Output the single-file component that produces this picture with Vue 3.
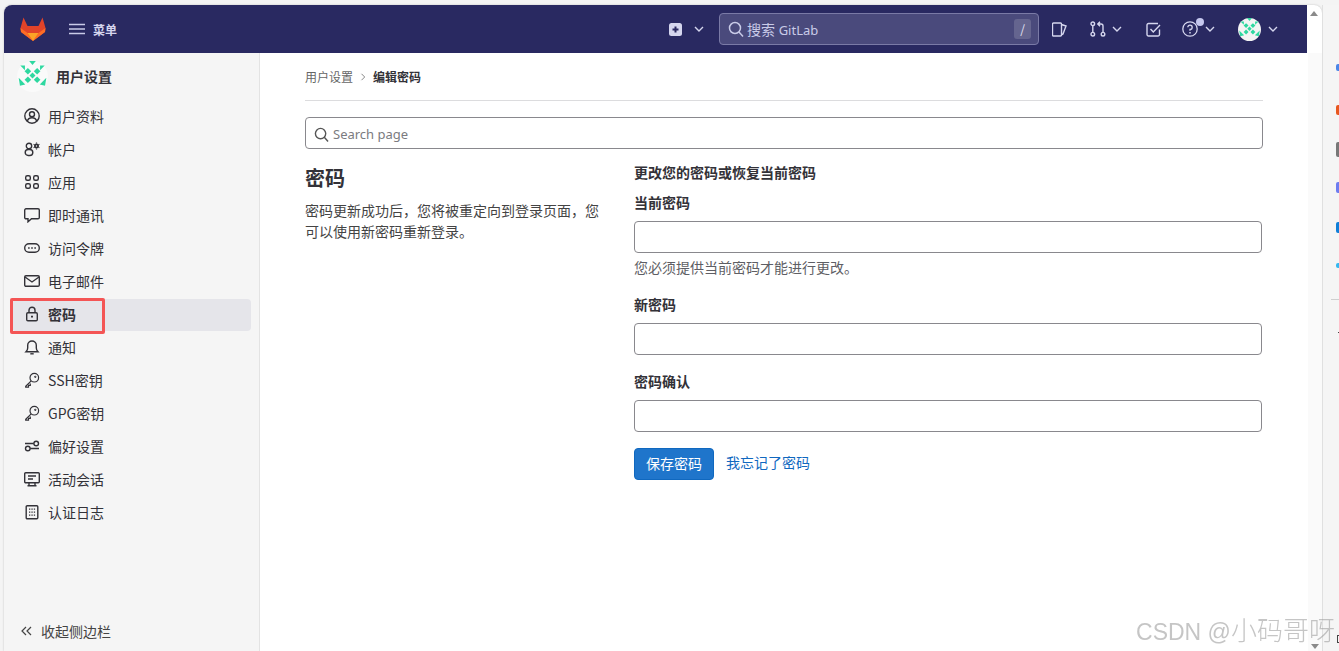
<script setup>
const menu = [
  { name: '用户资料', icon: 'profile' },
  { name: '帐户', icon: 'account' },
  { name: '应用', icon: 'apps' },
  { name: '即时通讯', icon: 'chat' },
  { name: '访问令牌', icon: 'token' },
  { name: '电子邮件', icon: 'mail' },
  { name: '密码', icon: 'lock', active: true },
  { name: '通知', icon: 'bell' },
  { name: 'SSH密钥', icon: 'key' },
  { name: 'GPG密钥', icon: 'key' },
  { name: '偏好设置', icon: 'prefs' },
  { name: '活动会话', icon: 'monitor' },
  { name: '认证日志', icon: 'log' },
]
const fields = [
  { label: '当前密码', hint: '您必须提供当前密码才能进行更改。' },
  { label: '新密码' },
  { label: '密码确认' },
]
const strip = [
  { y: 59, h: 7, c: '#4a86e8' },
  { y: 100, h: 10, c: '#e8571f' },
  { y: 137, h: 15, c: '#777' },
  { y: 177, h: 11, c: '#6d7cf0' },
  { y: 217, h: 11, c: '#0f7fd8' },
  { y: 258, h: 5, c: '#35b8f0' },
]
const diamond = (x, y, r = 10) => `${x},${y - r} ${x + r},${y} ${x},${y + r} ${x - r},${y}`
// identicon shapes, drawn in a 94 unit box centred on 60,58
const avatarShapes = [
  diamond(46, 42), diamond(74, 42), diamond(60, 55, 9), diamond(46, 68), diamond(74, 68),
  '50,11 70,11 60,23',
  '23,25 37,25 37,39',
  '97,25 83,25 83,39',
  '18,62 38,82 22,86',
  '102,62 82,82 98,86',
]
</script>

<template>
  <div class="Screen">
    <div class="Window">
      <header class="Navbar">
        <svg class="Logo" width="26" height="24" viewBox="0 0 26 24">
          <path d="M13 24 1 15 .5 11 3.500 .5 7.500 9h11L22.500 .5 25.500 11 25 15z" fill="#e24329" />
          <path d="M.5 11 1 15l12 9 -5.500 -8z" fill="#fc6d26" />
          <path d="M25.500 11 25 15 13 24l5.500 -8z" fill="#fc6d26" />
          <path d="M13 24 7.500 16h11z" fill="#fca326" />
        </svg>
        <svg class="Burger" width="16" height="12" viewBox="0 0 16 12">
          <path d="M0 1.500h16M0 6h16M0 10.500h16" stroke="#c9cbe8" stroke-width="1.500" fill="none" />
        </svg>
        <span class="MenuLabel">菜单</span>

        <div class="NavRight">
          <svg class="Plus" width="13" height="13" viewBox="0 0 13 13">
            <rect width="13" height="13" rx="2.500" fill="#d5d6ee" />
            <path d="M6.500 3.500v6M3.500 6.500h6" stroke="#2a2860" stroke-width="2" />
          </svg>
          <svg class="Chev ChevPlus" width="10" height="6" viewBox="0 0 10 6"><path d="M1 1l4 4 4-4" /></svg>
          <div class="NavSearch">
            <svg width="16" height="16" viewBox="0 0 16 16" fill="none" stroke="#c9cbe8" stroke-width="1.500">
              <circle cx="7" cy="7" r="5.500" /><path d="M11 11l4 4.500" />
            </svg>
            <span class="NavSearchText">搜索 <span class="NavSearchLatin">GitLab</span></span>
            <span class="SlashKey">/</span>
          </div>
          <svg class="NavIcon IconIssues" width="15" height="15" viewBox="0 0 15 15" fill="none" stroke="#d5d6ee" stroke-width="1.400">
            <path d="M1.500 1h7a1 1 0 0 1 1 1v11a1 1 0 0 1-1 1h-7a1 1 0 0 1-1-1V2a1 1 0 0 1 1-1zM9.500 2.500l4.500 1.500-3 8-1.500 1" />
          </svg>
          <svg class="NavIcon IconMr" width="16" height="16" viewBox="0 0 16 16" fill="none" stroke="#d5d6ee" stroke-width="1.400">
            <circle cx="2.800" cy="2.800" r="1.800" /><circle cx="2.800" cy="13.200" r="1.800" /><circle cx="13" cy="13.200" r="1.800" />
            <path d="M2.800 4.600v6.800M13 11.400V5a2 2 0 0 0-2-2H8M10 .8 7.800 3 10 5.200" />
          </svg>
          <svg class="Chev ChevMr" width="10" height="6" viewBox="0 0 10 6"><path d="M1 1l4 4 4-4" /></svg>
          <svg class="NavIcon IconTodo" width="15" height="15" viewBox="0 0 15 15" fill="none" stroke="#d5d6ee" stroke-width="1.400">
            <path d="M13.500 7.500v5a1.500 1.500 0 0 1-1.500 1.500H2.500A1.500 1.500 0 0 1 1 12.500V3a1.500 1.500 0 0 1 1.500-1.500H12" />
            <path d="M4.500 7 7.300 10 14 3" />
          </svg>
          <div class="HelpWrap">
            <svg width="16" height="16" viewBox="0 0 16 16" fill="none" stroke="#d5d6ee" stroke-width="1.300">
              <circle cx="8" cy="8" r="7.200" />
              <path d="M5.800 6.300A2.200 2.200 0 1 1 8 8.500v1.300" /><path d="M8 11v1.400" stroke-width="1.500" />
            </svg>
            <span class="HelpDot"></span>
          </div>
          <svg class="Chev ChevHelp" width="10" height="6" viewBox="0 0 10 6"><path d="M1 1l4 4 4-4" /></svg>
          <svg class="AvatarNav" width="23" height="23" viewBox="13 11 94 94">
            <circle cx="60" cy="58" r="47" fill="#f4f4f4" />
            <polygon v-for="(p, i) in avatarShapes" :key="i" :points="p" fill="#2ed8a0" />
          </svg>
          <svg class="Chev ChevAvatar" width="10" height="6" viewBox="0 0 10 6"><path d="M1 1l4 4 4-4" /></svg>
        </div>
      </header>

      <div class="Body">
        <aside class="Sidebar">
          <div class="SideHead">
            <svg width="31" height="31" viewBox="13 11 94 94">
              <circle cx="60" cy="58" r="47" fill="#fafafa" />
              <polygon v-for="(p, i) in avatarShapes" :key="i" :points="p" fill="#2ed8a0" />
            </svg>
            <span>用户设置</span>
          </div>
          <nav class="SideList">
            <a v-for="item in menu" :key="item.name" class="SideItem" :class="{ Active: item.active }">
              <svg width="16" height="16" viewBox="0 0 16 16" fill="none" stroke="#333238" stroke-width="1.400">
                <template v-if="item.icon === 'profile'">
                  <circle cx="8" cy="8" r="7.200" /><circle cx="8" cy="6.300" r="2.500" />
                  <path d="M3.300 13.300c.6-2.600 2.400-3.600 4.700-3.600s4.100 1 4.700 3.600" />
                </template>
                <template v-else-if="item.icon === 'account'">
                  <circle cx="5" cy="5" r="2.700" />
                  <rect x="1.200" y="8.500" width="7.600" height="6" rx="3" />
                  <circle cx="12.500" cy="5" r="1.600" stroke-width="1.800" />
                  <path d="M12.500 1.600v1M12.500 7.400v1M9.600 3.300l.9.5M14.500 6.200l.9.5M9.600 6.700l.9-.5M14.500 3.800l.9-.5" stroke-width="1.200" />
                </template>
                <template v-else-if="item.icon === 'apps'">
                  <rect x="1.700" y="1.700" width="4.600" height="4.600" rx="1.500" /><rect x="9.700" y="1.700" width="4.600" height="4.600" rx="1.500" />
                  <rect x="1.700" y="9.700" width="4.600" height="4.600" rx="1.500" /><rect x="9.700" y="9.700" width="4.600" height="4.600" rx="1.500" />
                </template>
                <path v-else-if="item.icon === 'chat'" d="M2 1.800h12a1.300 1.300 0 0 1 1.300 1.300v7.400a1.300 1.300 0 0 1-1.300 1.300H7.500L4 14.800v-3H2A1.300 1.300 0 0 1 .7 10.500V3.100A1.300 1.300 0 0 1 2 1.800z" />
                <template v-else-if="item.icon === 'token'">
                  <rect x=".7" y="3.700" width="14.600" height="8.600" rx="4.300" />
                  <path d="M4.300 8h1.200M7.400 8h1.200M10.500 8h1.200" stroke-width="1.800" />
                </template>
                <template v-else-if="item.icon === 'mail'">
                  <rect x=".7" y="2.700" width="14.600" height="10.600" rx="1.300" /><path d="M1 4l7 5 7-5" />
                </template>
                <template v-else-if="item.icon === 'lock'">
                  <rect x="2.700" y="6.700" width="10.600" height="8.100" rx="1.200" /><path d="M5 6.700V4.200a3 3 0 0 1 6 0v2.500" />
                  <path d="M8 9.700v1.800" stroke-width="2" />
                </template>
                <template v-else-if="item.icon === 'bell'">
                  <path d="M2 12.700h12c-1-1-1.700-1.800-1.700-3.700V6.300a4.300 4.300 0 0 0-8.600 0V9c0 1.900-.7 2.700-1.700 3.700z" /><path d="M6.300 14.800h3.400" />
                </template>
                <template v-else-if="item.icon === 'key'">
                  <circle cx="10.300" cy="5.700" r="4.300" stroke-width="1.200" />
                  <path d="M7.200 8.800 1.700 14.300v.9h2.800v-1.800h1.800V11.500" stroke-width="1.200" />
                  <circle cx="11.300" cy="4.800" r=".4" />
                </template>
                <template v-else-if="item.icon === 'prefs'">
                  <circle cx="3.800" cy="10.500" r="2.300" /><circle cx="12.200" cy="5.500" r="2.300" />
                  <path d="M1 5.500h8.800M6.200 10.500H15" />
                </template>
                <template v-else-if="item.icon === 'monitor'">
                  <rect x=".7" y="1.700" width="14.600" height="10" rx="1" /><path d="M4 5h8M4 8h5M5 11.700v3h6v-3M3.500 14.700h9" />
                </template>
                <template v-else-if="item.icon === 'log'">
                  <rect x="2.200" y="1.700" width="11.600" height="13.100" rx="1" />
                  <path d="M5 5.200h1.300M7.400 5.200h1.300M9.800 5.200h1.300M5 8.200h1.300M7.400 8.200h1.300M9.800 8.200h1.300M5 11.200h1.300M7.400 11.200h1.300M9.800 11.200h1.300" stroke-width="1.300" />
                </template>
              </svg>
              <span>{{ item.name }}</span>
            </a>
          </nav>
          <div class="Collapse">
            <svg width="11" height="10" viewBox="0 0 11 10" fill="none" stroke="#444" stroke-width="1.200">
              <path d="M5 1 1 5l4 4M10 1 6 5l4 4" />
            </svg>
            <span>收起侧边栏</span>
          </div>
        </aside>

        <main class="Main">
          <div class="Breadcrumb">
            <span class="CrumbLink">用户设置</span>
            <svg width="6" height="8" viewBox="0 0 6 8" fill="none" stroke="#888" stroke-width="1"><path d="M1.500 .8 4.700 4 1.500 7.200" /></svg>
            <strong>编辑密码</strong>
          </div>
          <div class="PageSearch">
            <svg width="15" height="15" viewBox="0 0 16 16" fill="none" stroke="#555" stroke-width="1.500">
              <circle cx="7" cy="7" r="5.500" /><path d="M11 11l4 4.500" />
            </svg>
            <span>Search page</span>
          </div>
          <div class="Columns">
            <section class="Intro">
              <h2>密码</h2>
              <p>密码更新成功后，您将被重定向到登录页面，您可以使用新密码重新登录。</p>
            </section>
            <form class="PassForm">
              <div class="FormTitle">更改您的密码或恢复当前密码</div>
              <div v-for="f in fields" :key="f.label" class="Field">
                <label>{{ f.label }}</label>
                <div class="Input"></div>
                <div v-if="f.hint" class="Hint">{{ f.hint }}</div>
              </div>
              <div class="Actions">
                <button type="button" class="SaveBtn">保存密码</button>
                <a class="Forgot">我忘记了密码</a>
              </div>
            </form>
          </div>
        </main>

        <div class="Scrollbar">
          <span class="ArrowUp"></span>
          <span class="ArrowDown"></span>
        </div>
      </div>
    </div>

    <div class="SideStrip">
      <span v-for="s in strip" :key="s.y" class="StripMark" :style="{ top: s.y + 'px', height: s.h + 'px', background: s.c }"></span>
      <span class="StripLine"></span>
      <span class="StripDash"></span>
      <span class="StripBit"></span>
    </div>

    <div class="RedBox"></div>
    <div class="Watermark">CSDN @<span class="WatermarkCjk">小码哥呀</span></div>
  </div>
</template>

<style>
html, body { margin: 0; background: #fff; overflow: hidden; }
</style>

<style scoped>
.Screen {
  position: relative;
  display: flex;
  width: 1339px;
  height: 651px;
  overflow: hidden;
  box-sizing: border-box;
  padding: 5px 0 0 4px;
  background: #f4f4f4;
  font-family: "Noto Sans CJK SC", "Noto Sans", sans-serif;
  font-size: 14px;
  color: #333238;
}
.Window {
  width: 1318px;
  flex: none;
  display: flex;
  flex-direction: column;
  background: #fff;
  border-radius: 8px 8px 0 0;
  overflow: hidden;
  box-shadow: 0 0 2px #bbb;
}
.Navbar {
  height: 48px;
  flex: none;
  width: 1303px;
  display: flex;
  align-items: center;
  background: #292961;
  color: #d5d6ee;
}
.Logo { margin-left: 16px; }
.Burger { margin-left: 23px; }
.MenuLabel { margin-left: 8px; font-size: 12px; font-weight: 700; color: #d5d6ee; }
.NavRight { margin-left: auto; display: flex; align-items: center; }
.Plus { margin-right: 12px; }
.Chev { fill: none; stroke: #d5d6ee; stroke-width: 1.400; }
.ChevPlus { margin-right: 15px; }
.NavSearch {
  width: 320px;
  height: 32px;
  box-sizing: border-box;
  padding: 0 7px 0 8px;
  display: flex;
  align-items: center;
  background: #4a4a7c;
  border: 1px solid #7a7aa6;
  border-radius: 4px;
}
.NavSearchText {
  margin-left: 3px;
  font-size: 14px;
  color: #c9cbe8;
  font-family: "Noto Sans", "Noto Sans CJK SC", sans-serif;
}
.NavSearchLatin { font-size: 13px; }
.SlashKey {
  margin-left: auto;
  width: 17px;
  height: 20px;
  line-height: 20px;
  text-align: center;
  background: #65658f;
  border-radius: 3px;
  font-size: 12px;
  color: #e4e4f4;
}
.IconIssues { margin-left: 13px; }
.IconMr { margin-left: 23px; }
.ChevMr { margin-left: 6px; }
.IconTodo { margin-left: 24px; }
.HelpWrap { position: relative; display: flex; margin-left: 21px; }
.HelpDot {
  position: absolute;
  top: -3px;
  right: -6px;
  width: 8px;
  height: 8px;
  border-radius: 50%;
  background: #c5c7ee;
}
.ChevHelp { margin-left: 7px; }
.AvatarNav { margin-left: 23px; }
.ChevAvatar { margin-left: 7px; margin-right: 29px; }

.Body { flex: 1; display: flex; min-height: 0; }
.Sidebar {
  width: 256px;
  flex: none;
  box-sizing: border-box;
  display: flex;
  flex-direction: column;
  background: #f5f5f5;
  border-right: 1px solid #e3e3e3;
}
.SideHead {
  height: 46px;
  flex: none;
  display: flex;
  align-items: center;
  gap: 8px;
  padding-left: 13px;
  box-sizing: border-box;
  font-size: 14px;
  font-weight: 700;
}
.SideList { display: flex; flex-direction: column; gap: 1px; padding: 2px 8px 0; }
.SideItem {
  height: 32px;
  box-sizing: border-box;
  display: flex;
  align-items: center;
  gap: 8px;
  padding: 0 0 2px 12px;
  border-radius: 4px;
  color: #333238;
}
.SideItem.Active { background: #e5e5ea; font-weight: 700; }
.Collapse {
  margin-top: auto;
  height: 40px;
  display: flex;
  align-items: center;
  gap: 9px;
  padding-left: 17px;
  color: #444;
}
.Main {
  width: 1048px;
  flex: none;
  box-sizing: border-box;
  padding: 0 45px 0 45px;
}
.Breadcrumb {
  height: 48px;
  box-sizing: border-box;
  display: flex;
  align-items: center;
  gap: 7px;
  font-size: 12px;
  border-bottom: 1px solid #dcdcde;
}
.CrumbLink { color: #666; }
.Breadcrumb strong { color: #333238; }
.PageSearch {
  margin-top: 16px;
  height: 32px;
  box-sizing: border-box;
  display: flex;
  align-items: center;
  gap: 4px;
  padding: 2px 0 0 8px;
  border: 1px solid #89888d;
  border-radius: 4px;
  color: #7b7b80;
  font-size: 13px;
  font-family: "Noto Sans", "Noto Sans CJK SC", sans-serif;
}
.Columns { display: flex; margin-top: 14px; }
.Intro { width: 329px; flex: none; }
.Intro h2 { margin: 0; font-size: 20px; line-height: 30px; font-weight: 700; }
.Intro p { margin: 7px 0 0; width: 296px; line-height: 21px; color: #444; }
.PassForm { flex: 1; margin-top: -1px; margin-right: 1px; }
.FormTitle { font-weight: 700; font-size: 14px; line-height: 20px; }
.Field { margin-bottom: 16px; }
.Field:nth-child(2) { margin-top: 10px; }
.Field label { display: block; font-weight: 700; font-size: 14px; line-height: 20px; margin-bottom: 9px; }
.Input {
  height: 32px;
  box-sizing: border-box;
  background: #fff;
  border: 1px solid #89888d;
  border-radius: 4px;
}
.Hint { margin-top: 4px; font-size: 14px; line-height: 20px; color: #5e5e64; margin-bottom: 17px; }
.Actions { display: flex; align-items: center; gap: 12px; margin-top: 13px; }
.SaveBtn {
  width: 80px;
  height: 32px;
  padding: 0 0 2px;
  border: 1px solid #1068bf;
  border-radius: 4px;
  background: #1f75cb;
  color: #fff;
  font: inherit;
  font-size: 14px;
}
.Forgot { color: #1068bf; font-size: 14px; margin-top: -5px; }
.Scrollbar { flex: 1; position: relative; background: #fafafa; }

.ArrowUp, .ArrowDown {
  position: fixed;
  left: 1310px;
  width: 0;
  height: 0;
  border-left: 4px solid transparent;
  border-right: 4px solid transparent;
}
.ArrowUp { top: 11px; border-bottom: 5px solid #8a8a8a; }
.ArrowDown { left: 1311px; top: 644px; border-top: 5px solid #8a8a8a; }

.SideStrip { position: relative; flex: 1; background: #f5f5f5; border-left: 1px solid #e0e0e0; }
.StripMark { position: absolute; left: 13px; width: 3px; border-radius: 2px 0 0 2px; }
.StripLine { position: absolute; top: 294px; left: 8px; right: 0; height: 1px; background: #cfcfcf; }
.StripDash { position: absolute; top: 327px; left: 15px; width: 3px; height: 1px; background: #444; }
.StripBit {
  position: absolute;
  top: 630px;
  left: 14px;
  width: 3px;
  height: 8px;
  box-sizing: border-box;
  border: 1px solid #444;
  border-right: 0;
}

.RedBox {
  position: absolute;
  left: 10px;
  top: 298px;
  width: 95px;
  height: 36px;
  box-sizing: border-box;
  border: 3px solid #f45555;
  border-radius: 2px;
  pointer-events: none;
}
.Watermark {
  position: absolute;
  right: 4px;
  top: 614px;
  font-family: "Liberation Sans", "Noto Sans CJK SC", sans-serif;
  font-size: 23px;
  line-height: 30px;
  color: rgba(150, 150, 150, .55);
  white-space: nowrap;
}
.WatermarkCjk { font-size: 26px; font-family: "Noto Sans CJK SC", sans-serif; font-weight: 300; }
</style>
